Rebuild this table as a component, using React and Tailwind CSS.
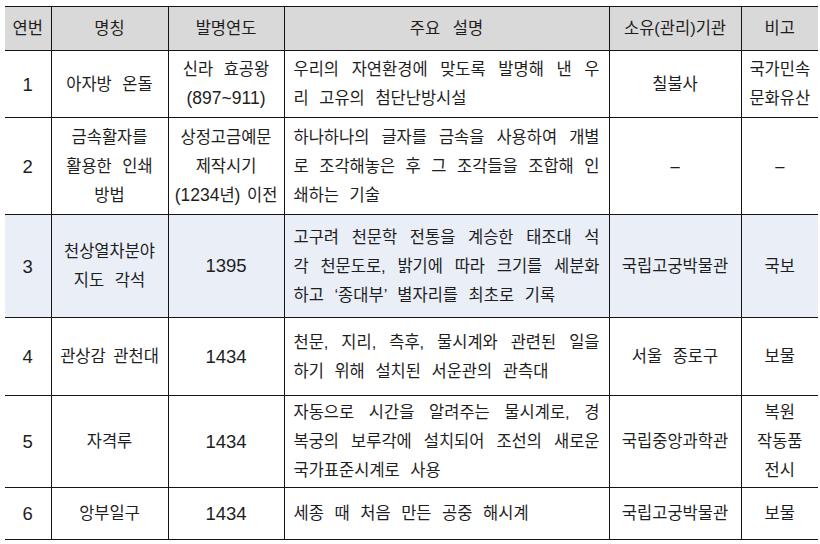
import React from "react";

const FONT = { fontFamily: '"Liberation Sans", "Noto Sans CJK KR", sans-serif' };

const N = ({ children }) => <span className="text-[18.5px]">{children}</span>;
const P = ({ children }) => <span className="text-[17.5px]">{children}</span>;

const rows = [
  {
    no: "1",
    name: ["아자방 온돌"],
    year: ["신라 효공왕", <P key="a">(897~911)</P>],
    desc: ["우리의 자연환경에 맞도록 발명해 낸 우", "리 고유의 첨단난방시설"],
    owner: ["칠불사"],
    note: ["국가민속", "문화유산"],
    h: "h-[67px]",
  },
  {
    no: "2",
    name: ["금속활자를", "활용한 인쇄", "방법"],
    year: [
      "상정고금예문",
      "제작시기",
      <span key="b" className="[word-spacing:2px]">
        <P>(1234</P>년<P>)</P> 이전
      </span>,
    ],
    desc: [
      "하나하나의 글자를 금속을 사용하여 개별",
      "로 조각해놓은 후 그 조각들을 조합해 인",
      "쇄하는 기술",
    ],
    owner: ["–"],
    note: ["–"],
    h: "h-[97px]",
  },
  {
    no: "3",
    name: ["천상열차분야", "지도 각석"],
    year: [<N key="c">1395</N>],
    desc: [
      "고구려 천문학 전통을 계승한 태조대 석",
      "각 천문도로, 밝기에 따라 크기를 세분화",
      "하고 ‘종대부’ 별자리를 최초로 기록",
    ],
    owner: ["국립고궁박물관"],
    note: ["국보"],
    h: "h-[103px]",
    shade: true,
  },
  {
    no: "4",
    name: [<span key="d" className="[word-spacing:3px]">관상감 관천대</span>],
    year: [<N key="e">1434</N>],
    desc: ["천문, 지리, 측후, 물시계와 관련된 일을", "하기 위해 설치된 서운관의 관측대"],
    owner: ["서울 종로구"],
    note: ["보물"],
    h: "h-[78px]",
  },
  {
    no: "5",
    name: ["자격루"],
    year: [<N key="f">1434</N>],
    desc: [
      "자동으로 시간을 알려주는 물시계로, 경",
      "복궁의 보루각에 설치되어 조선의 새로운",
      "국가표준시계로 사용",
    ],
    owner: ["국립중앙과학관"],
    note: ["복원", "작동품", "전시"],
    h: "h-[92px]",
  },
  {
    no: "6",
    name: ["앙부일구"],
    year: [<N key="g">1434</N>],
    desc: ["세종 때 처음 만든 공중 해시계"],
    owner: ["국립고궁박물관"],
    note: ["보물"],
    h: "h-[52px]",
  },
];

function Lines({ lines }) {
  return (
    <div className="flex flex-col items-center">
      {lines.map((l, i) => (
        <div key={i} className="whitespace-nowrap">
          {l}
        </div>
      ))}
    </div>
  );
}

function Desc({ lines }) {
  return (
    <div className="flex flex-col">
      {lines.map((l, i) => (
        <div
          key={i}
          className={
            i < lines.length - 1
              ? "whitespace-nowrap text-justify [text-align-last:justify] [word-spacing:0px]"
              : "whitespace-nowrap text-left [word-spacing:6px]"
          }
        >
          {l}
        </div>
      ))}
    </div>
  );
}

const td = "border-y border-[#141414] align-middle text-center p-0";
const tdv = td + " border-l";

export default function App() {
  return (
    <div className="w-[820px] h-[544px] bg-white pt-[6px] pl-[5px]" style={FONT}>
      <table className="table-fixed border-collapse w-[813px] text-[16.5px] leading-[29px] text-[#1e1e1e]">
        <colgroup>
          <col className="w-[46px]" />
          <col className="w-[117px]" />
          <col className="w-[116px]" />
          <col className="w-[325px]" />
          <col className="w-[132px]" />
          <col className="w-[77px]" />
        </colgroup>
        <thead>
          <tr className="h-[44px] bg-[#d9d9d9]">
            <th className={td + " font-normal"}>연번</th>
            <th className={tdv + " font-normal"}>명칭</th>
            <th className={tdv + " font-normal"}>발명연도</th>
            <th className={tdv + " font-normal [word-spacing:8px]"}>주요 설명</th>
            <th className={tdv + " font-normal"}>소유(관리)기관</th>
            <th className={tdv + " font-normal"}>비고</th>
          </tr>
        </thead>
        <tbody>
          {rows.map((r) => (
            <tr key={r.no} className={r.h + (r.shade ? " bg-[#e9eef7]" : " bg-white")}>
              <td className={td + " text-[18.5px]"}>{r.no}</td>
              <td className={tdv + " [word-spacing:6px]"}>
                <Lines lines={r.name} />
              </td>
              <td className={tdv + " [word-spacing:6px]"}>
                <Lines lines={r.year} />
              </td>
              <td className={tdv + " px-[9px] text-left"}>
                <Desc lines={r.desc} />
              </td>
              <td className={tdv + " [word-spacing:6px]"}>
                <Lines lines={r.owner} />
              </td>
              <td className={tdv}>
                <Lines lines={r.note} />
              </td>
            </tr>
          ))}
        </tbody>
      </table>
    </div>
  );
}
